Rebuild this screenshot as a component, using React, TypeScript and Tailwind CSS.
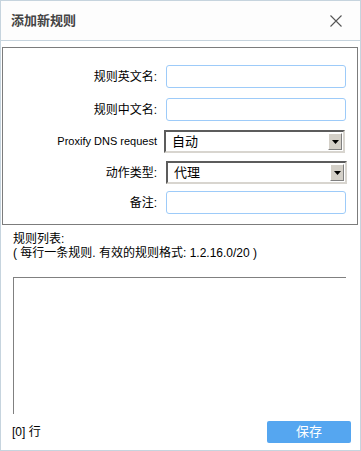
const font = { fontFamily: '"Liberation Sans", "Noto Sans CJK SC", sans-serif' };

function TextInput() {
  return <div className="h-[23px] w-[180px] rounded-[3px] border border-[#9dcbf9] bg-white" />;
}

function Select({ value }: { value: string }) {
  return (
    <div className="flex h-[23px] w-[181px] items-stretch border-2 border-t-[#5c5c5c] border-l-[#5c5c5c] border-b-[#d8d5cf] border-r-[#d8d5cf] bg-white">
      <div className="flex flex-1 items-center pl-[6px] text-[13px] text-black">{value}</div>
      <div className="my-[1px] mr-[1px] flex w-[14px] items-center justify-center border border-t-white border-l-white border-b-[#808080] border-r-[#808080] bg-[#d4d0c8]">
        <svg width="7" height="4" viewBox="0 0 7 4">
          <path d="M0 0h7L3.5 4z" fill="#000" />
        </svg>
      </div>
    </div>
  );
}

function Row({ label, children, className = "", labelClass = "text-[12px]" }: { label: string; children: React.ReactNode; className?: string; labelClass?: string }) {
  return (
    <div className={`flex items-center ${className}`}>
      <div className={`w-[154px] shrink-0 text-right text-black ${labelClass}`}>{label}</div>
      {children}
    </div>
  );
}

export default function App() {
  return (
    <div className="flex h-[451px] w-[361px] flex-col border border-[#c6d4de] bg-white" style={font}>
      <div className="flex h-[40px] shrink-0 items-center justify-between border-b border-[#c6d4de] bg-[#fdfdfd] pl-[10px] pr-[18px]">
        <span className="text-[13px] font-bold text-[#444]">添加新规则</span>
        <svg width="12" height="12" viewBox="0 0 12 12">
          <path d="M0.5 0.5L11.5 11.5M11.5 0.5L0.5 11.5" stroke="#555" strokeWidth="1.1" />
        </svg>
      </div>

      <div className="ml-[1px] mr-[2px] mt-[6px] h-[178px] border border-[#7c7c7c] pt-[17px]">
        <Row label="规则英文名:">
          <div className="ml-[9px]"><TextInput /></div>
        </Row>
        <Row label="规则中文名:" className="mt-[10px]">
          <div className="ml-[9px]"><TextInput /></div>
        </Row>
        <Row label="Proxify DNS request" labelClass="text-[11px] text-[#1a1a3a]" className="mt-[9px]">
          <div className="ml-[7px]"><Select value="自动" /></div>
        </Row>
        <Row label="动作类型:" className="mt-[8px]">
          <div className="ml-[9px]"><Select value="代理" /></div>
        </Row>
        <Row label="备注:" className="mt-[7px]">
          <div className="ml-[9px]"><TextInput /></div>
        </Row>
      </div>

      <div className="ml-[12px] mt-[7px] text-[12px] leading-[14px] text-black">
        <div>规则列表:</div>
        <div>( 每行一条规则. 有效的规则格式: 1.2.16.0/20 )</div>
      </div>

      <div className="ml-[12px] mt-[17px] h-[137px] w-[333px] border-l border-t border-[#808080] bg-white" />

      <div className="flex flex-1 items-center justify-between pl-[11px] pr-[9px]">
        <span className="text-[12px] text-black">[0] 行</span>
        <button className="h-[22px] w-[84px] rounded-[2px] bg-[#55a6f0] text-[13px] text-white">保存</button>
      </div>
    </div>
  );
}
